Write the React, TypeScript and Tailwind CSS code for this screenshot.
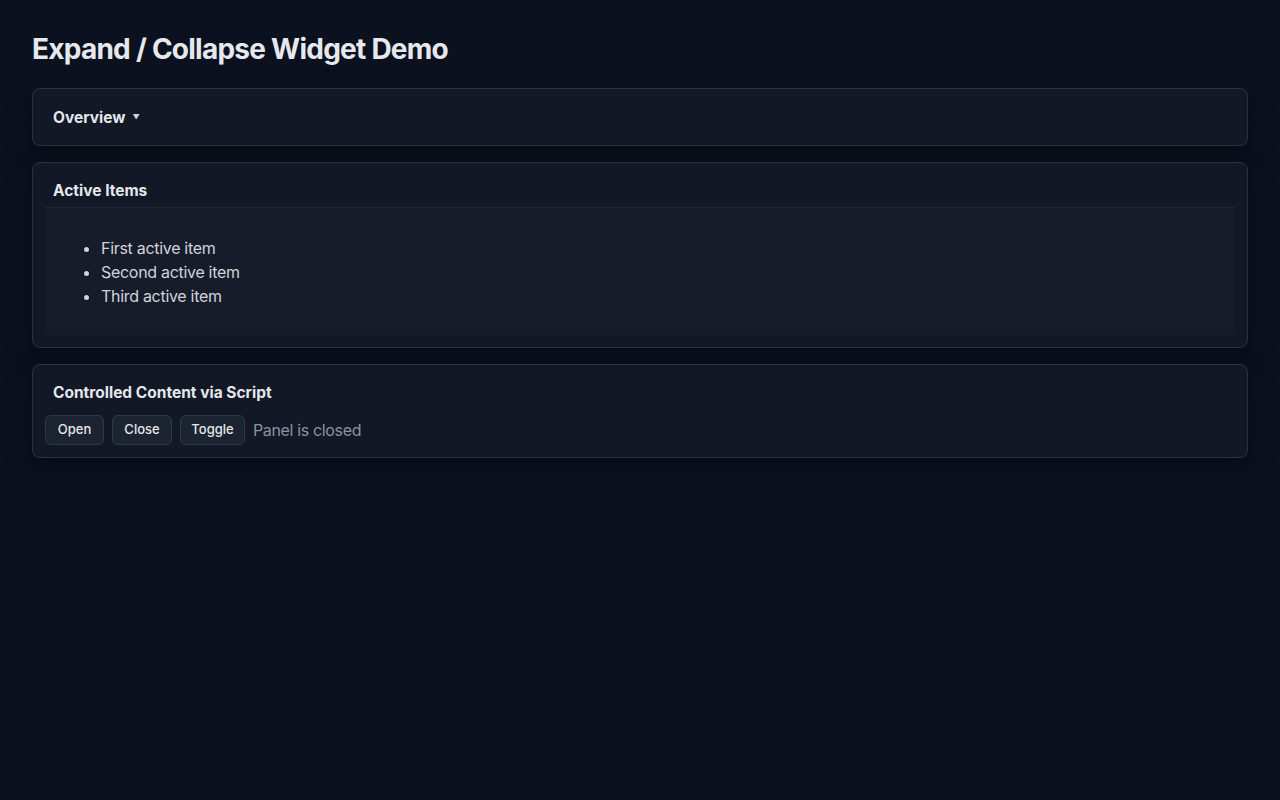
import React from "react";

export default function App() {
  return (
    <div
      className="min-h-[800px] w-full bg-[#0b111e] p-8 text-[#e5e7eb]"
      style={{ fontFamily: "Inter, 'Noto Sans', sans-serif" }}
    >
      <h1 className="mb-[22px] text-[28px] font-bold leading-[34px] tracking-[-0.75px] text-[#e6e8ee]">
        Expand / Collapse Widget Demo
      </h1>
      <div className="flex flex-col gap-4">
        <div className="rounded-lg border border-[#2a3345] bg-[#121826] p-3 shadow-[0_8px_24px_rgba(0,0,0,0.35)]">
          <div className="flex items-center px-2 pb-[7px] pt-[9px] text-[15.5px] font-bold leading-4 text-[#e5e7eb]">
            <span>Overview</span>
            <span className="ml-[7px] text-[7px] text-[#d1d5db]">▼</span>
          </div>
        </div>

        <div className="rounded-lg border border-[#2a3345] bg-[#121826] p-3 shadow-[0_8px_24px_rgba(0,0,0,0.35)]">
          <div className="px-2 py-2 text-[15.5px] font-bold leading-4 text-[#e5e7eb]">
            Active Items
          </div>
          <div className="border-t border-[#1f2737] bg-[#161c2a] px-4 pb-[11px] pt-3">
            <ul className="my-4 list-disc pl-10 text-[16px] leading-6 tracking-[-0.3px] text-[#cfd4dc]">
              <li>First active item</li>
              <li>Second active item</li>
              <li>Third active item</li>
            </ul>
          </div>
        </div>

        <div className="rounded-lg border border-[#2a3345] bg-[#121826] p-3 shadow-[0_8px_24px_rgba(0,0,0,0.35)]">
          <div className="px-2 py-2 text-[15.5px] font-bold leading-4 text-[#e5e7eb]">
            Controlled Content via Script
          </div>
          <div className="mt-1.5 flex items-center gap-2">
            <button className="h-[30px] w-[59px] rounded-md border border-[#2f3849] bg-[#1d2431] text-[13px] font-medium text-[#e5e7eb]">
              Open
            </button>
            <button className="h-[30px] w-[60px] rounded-md border border-[#2f3849] bg-[#1d2431] text-[13px] font-medium text-[#e5e7eb]">
              Close
            </button>
            <button className="h-[30px] w-[65px] rounded-md border border-[#2f3849] bg-[#1d2431] text-[13px] font-medium text-[#e5e7eb]">
              Toggle
            </button>
            <span className="text-[16px] tracking-[-0.35px] text-[#8b93a1]">Panel is closed</span>
          </div>
        </div>
      </div>
    </div>
  );
}
